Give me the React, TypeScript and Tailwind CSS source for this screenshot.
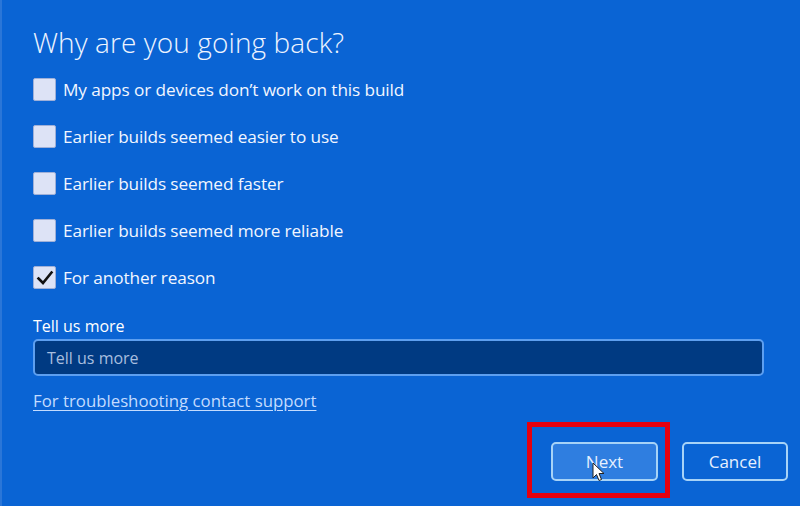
import React from "react";

const items = [
  { label: "My apps or devices don’t work on this build", checked: false },
  { label: "Earlier builds seemed easier to use", checked: false },
  { label: "Earlier builds seemed faster", checked: false },
  { label: "Earlier builds seemed more reliable", checked: false },
  { label: "For another reason", checked: true },
];

function Box({ checked }: { checked: boolean }) {
  return (
    <div className="w-[23px] h-[23px] rounded-[2px] border border-[#9fb0d8] bg-[#dde3f6] flex items-center justify-center shrink-0">
      {checked && (
        <svg width="18" height="18" viewBox="0 0 18 18">
          <path d="M2.5 9.5 L7 14 L15.5 3.5" fill="none" stroke="#111" strokeWidth="2.6" strokeLinecap="square" />
        </svg>
      )}
    </div>
  );
}

export default function App() {
  return (
    <div
      className="w-[800px] h-[506px] bg-[#0a64d4] text-white overflow-hidden relative border-l-[2px] border-[#2a76d8]"
      style={{ fontFamily: '"Open Sans", "Noto Sans", sans-serif' }}
    >
      <div className="pl-[31px] pr-[11px] pt-[23px] flex flex-col">
        <h1 className="text-[28px] leading-[38px] font-light tracking-[0.1px] text-[#eef4ff]">
          Why are you going back?
        </h1>
        <div className="mt-[17px] flex flex-col gap-[24px]">
          {items.map((it) => (
            <div key={it.label} className="flex items-center gap-[7px] h-[23px]">
              <Box checked={it.checked} />
              <span className="text-[17.2px] leading-[23px] text-[#f2f6ff] tracking-[-0.1px]">{it.label}</span>
            </div>
          ))}
        </div>
        <div className="mt-[26px] text-[16px] leading-[22px] font-medium text-white">Tell us more</div>
        <div className="mt-[2px] h-[37px] w-[731px] rounded-[5px] border-2 border-[#5d9ff0] bg-[#003a82] flex items-center pl-[12px]">
          <span className="text-[16px] text-[#a8bedf]">Tell us more</span>
        </div>
        <a className="mt-[14px] text-[16.8px] leading-[22px] text-[#c4dcff] underline underline-offset-[3px] self-start">
          For troubleshooting contact support
        </a>
        <div className="mt-[30px] flex justify-end gap-[24px] pr-[1px]">
          <div className="relative">
            <button className="w-[107px] h-[39px] rounded-[5px] border-2 border-[#a7d3f7] bg-[#2f7ee0] text-[17px] text-[#e6f0ff]">
              Next
            </button>
            <div className="absolute left-[-24px] top-[-20px] w-[143px] h-[76px] border-[5px] border-[#e6000e] pointer-events-none" />
            <svg className="absolute left-[41px] top-[20px]" width="14" height="20" viewBox="0 0 14 20">
              <path d="M1 1 L1 16 L4.5 12.5 L7 18.5 L9.5 17.5 L7 11.5 L12 11.5 Z" fill="#fff" stroke="#222" strokeWidth="1" strokeLinejoin="round" />
            </svg>
          </div>
          <button className="w-[106px] h-[39px] rounded-[5px] border-2 border-[#a7d3f7] bg-[#0a64d4] text-[17px] text-[#e6f0ff]">
            Cancel
          </button>
        </div>
      </div>
    </div>
  );
}
